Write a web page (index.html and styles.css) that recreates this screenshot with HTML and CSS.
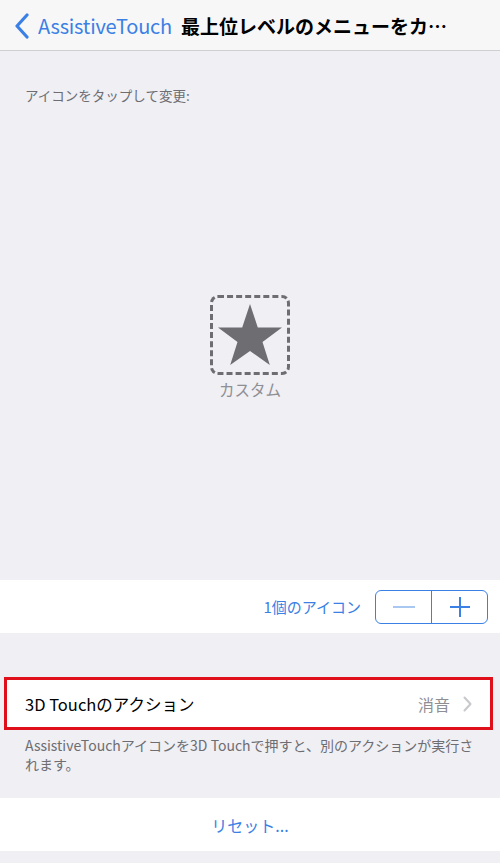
FILE: index.html
```html
<!DOCTYPE html>
<html lang="ja">

<head>
  <meta charset="UTF-8" />
  <meta name="viewport" content="width=device-width, initial-scale=1.0" />
  <title>最上位レベルのメニューをカスタマイズ</title>
  <link rel="stylesheet" href="styles.css">
</head>

<body>
  <header class="navbar">
    <a class="back" href="#">
      <svg class="back-chevron" width="16" height="26" viewBox="0 0 16 26">
        <path d="M13 2 L3 13 L13 24" fill="none" stroke="currentColor" stroke-width="3.2" stroke-linecap="round" stroke-linejoin="round" />
      </svg>
      <span>AssistiveTouch</span>
    </a>
    <h1 class="title">最上位レベルのメニューをカ…</h1>
  </header>

  <section class="editor">
    <p class="hint">アイコンをタップして変更:</p>
    <div class="custom-icon">
      <div class="icon-box">
        <svg width="66" height="64" viewBox="0 0 66 64">
          <polygon points="33,2 40.8,25.5 65,25.5 45.5,40 52.8,63 33,49 13.2,63 20.5,40 1,25.5 25.2,25.5" fill="#6e6d72" />
        </svg>
      </div>
      <span class="icon-label">カスタム</span>
    </div>
  </section>

  <div class="row count-row">
    <span class="count">1個のアイコン</span>
    <div class="stepper">
      <button class="step minus" disabled>
        <svg width="22" height="4" viewBox="0 0 22 4"><rect width="22" height="2" y="1" fill="currentColor" /></svg>
      </button>
      <button class="step plus">
        <svg width="20" height="20" viewBox="0 0 20 20"><rect x="9" width="2" height="20" fill="currentColor" /><rect y="9" width="20" height="2" fill="currentColor" /></svg>
      </button>
    </div>
  </div>

  <div class="row action-row">
    <span class="action-name">3D Touchのアクション</span>
    <span class="action-value">消音</span>
    <svg class="disclosure" width="9" height="16" viewBox="0 0 9 16">
      <path d="M1.5 1.5 L7.5 8 L1.5 14.5" fill="none" stroke="#c7c7cc" stroke-width="2" stroke-linecap="round" stroke-linejoin="round" />
    </svg>
  </div>
  <p class="footer-note">AssistiveTouchアイコンを3D Touchで押すと、別のアクションが実行されます。</p>

  <div class="row reset-row">
    <a class="reset" href="#">リセット...</a>
  </div>
</body>

</html>
```

FILE: styles.css
```css
body {
  margin: 0;
  background: #efeff4;
  font-family: "Noto Sans CJK JP", "Noto Sans", sans-serif;
  color: #000;
  width: 500px;
  height: 863px;
  overflow: hidden;
}

.navbar {
  height: 50px;
  background: #f7f7f8;
  border-bottom: 1px solid #cfcfd3;
  display: flex;
  align-items: center;
  padding-left: 14px;
}

.back {
  display: flex;
  align-items: center;
  gap: 8px;
  color: #3b80e4;
  text-decoration: none;
  font-size: 20px;
  letter-spacing: -0.2px;
}

.back-chevron {
  margin-top: 1px;
}

.title {
  margin: 0 0 0 9px;
  font-size: 19px;
  font-weight: bold;
  white-space: nowrap;
}

.editor {
  height: 529px;
}

.hint {
  margin: 0;
  padding: 34px 25px 0;
  font-size: 13.5px;
  line-height: 20px;
  color: #6d6d72;
}

.custom-icon {
  display: flex;
  flex-direction: column;
  align-items: center;
  margin-top: 190px;
}

.icon-box {
  width: 74px;
  height: 74px;
  border: 3px dashed #6e6d72;
  border-radius: 8px;
  display: flex;
  align-items: center;
  justify-content: center;
}

.icon-box svg {
  margin-top: -3px;
}

.icon-label {
  margin-top: 3px;
  font-size: 15.5px;
  line-height: 22px;
  color: #8e8e93;
}

.row {
  background: #fff;
  display: flex;
  align-items: center;
}

.count-row {
  height: 53px;
  justify-content: flex-end;
  padding-right: 12px;
}

.count {
  font-size: 15px;
  color: #3b80e4;
  margin-right: 14px;
}

.stepper {
  display: flex;
  width: 113px;
  height: 34px;
  box-sizing: border-box;
  border: 1.5px solid #3b80e4;
  border-radius: 6px;
  overflow: hidden;
}

.step {
  flex: 1;
  border: none;
  background: none;
  padding: 0;
  display: flex;
  align-items: center;
  justify-content: center;
  color: #3b80e4;
}

.step.minus {
  color: #a9c8f1;
  border-right: 1.5px solid #3b80e4;
}

.action-row {
  margin: 44px 7px 0 4px;
  height: 47px;
  border: 3px solid #e0101a;
  padding: 0 18px 0 18px;
}

.action-name {
  flex: 1;
  font-size: 16.5px;
}

.action-value {
  font-size: 16px;
  color: #8e8e93;
  margin-right: 13px;
}

.footer-note {
  margin: 0;
  padding: 6px 22px 0 25px;
  font-size: 14px;
  line-height: 19px;
  color: #6d6d72;
}

.reset-row {
  margin-top: 24px;
  height: 53px;
  justify-content: center;
}

.reset {
  color: #3b80e4;
  text-decoration: none;
  font-size: 16px;
}
```
